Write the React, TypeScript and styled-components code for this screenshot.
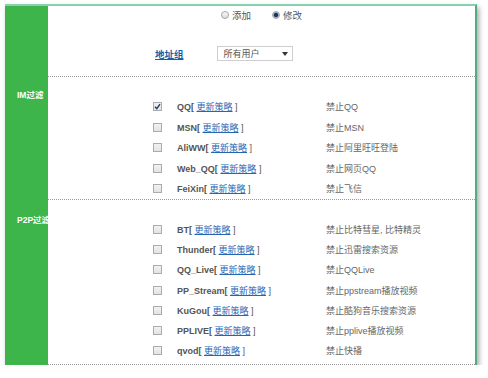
import React from 'react';
import styled, { createGlobalStyle } from 'styled-components';

interface Rule {
  name: string;
  desc: string;
  checked?: boolean;
}

const imRules: Rule[] = [
  { name: 'QQ', desc: '禁止QQ', checked: true },
  { name: 'MSN', desc: '禁止MSN' },
  { name: 'AliWW', desc: '禁止阿里旺旺登陆' },
  { name: 'Web_QQ', desc: '禁止网页QQ' },
  { name: 'FeiXin', desc: '禁止飞信' },
];

const p2pRules: Rule[] = [
  { name: 'BT', desc: '禁止比特彗星, 比特精灵' },
  { name: 'Thunder', desc: '禁止迅雷搜索资源' },
  { name: 'QQ_Live', desc: '禁止QQLive' },
  { name: 'PP_Stream', desc: '禁止ppstream播放视频' },
  { name: 'KuGou', desc: '禁止酷狗音乐搜索资源' },
  { name: 'PPLIVE', desc: '禁止pplive播放视频' },
  { name: 'qvod', desc: '禁止快播' },
];

export default function App() {
  return (
    <>
      <GlobalStyle />
      <Frame>
        <Section>
          <Side />
          <Main $pad="2px 0 15px">
            <RadioRow>
              <RadioLabel>
                <Radio selected={false} />
                添加
              </RadioLabel>
              <RadioLabel>
                <Radio selected />
                修改
              </RadioLabel>
            </RadioRow>
            <AddrRow>
              <GroupLink>地址组</GroupLink>
              <SelectBox>
                <span>所有用户</span>
                <Arrow />
              </SelectBox>
            </AddrRow>
          </Main>
        </Section>

        <Section>
          <Side>
            <SideLabel $top={13}>IM过滤</SideLabel>
          </Side>
          <Main $pad="19.5px 0 0">
            {imRules.map((r) => (
              <RuleRow key={r.name} $h={20.5} rule={r} />
            ))}
          </Main>
        </Section>

        <Section>
          <Side>
            <SideLabel $top={15}>P2P过滤</SideLabel>
          </Side>
          <Main $pad="19px 0 3px">
            {p2pRules.map((r) => (
              <RuleRow key={r.name} $h={20.3} rule={r} />
            ))}
          </Main>
        </Section>
      </Frame>
    </>
  );
}

function Radio({ selected }: { selected: boolean }) {
  return <RadioDot selected={selected} />;
}

function RuleRow({ rule, $h }: { rule: Rule; $h: number }) {
  return (
    <Row $h={$h}>
      <Check>
        {rule.checked && (
          <svg width="7" height="7" viewBox="0 0 7 7">
            <path d="M1 3.8 L2.8 5.6 L6 1.2" fill="none" stroke="#1c3f7a" strokeWidth="1.4" />
          </svg>
        )}
      </Check>
      <Name>
        <b>{rule.name}[</b> <Update>更新策略</Update> ]
      </Name>
      <Desc>{rule.desc}</Desc>
    </Row>
  );
}

const GlobalStyle = createGlobalStyle`
  * { box-sizing: border-box; }
  body {
    margin: 0;
    background: #fff;
    font-family: "Liberation Sans", "Noto Sans CJK SC", sans-serif;
  }
`;

const Frame = styled.div`
  margin: 4px 0 0 5px;
  width: 472px;
  border-top: 2px solid #88d1ae;
  border-right: 2px solid #55aa80;
  background: #fff;
  box-shadow: 2px 3px 5px rgba(0, 0, 0, 0.35);
`;

const Section = styled.div`
  display: grid;
  grid-template-columns: 43px 1fr;
`;

const Side = styled.div`
  background: #3db54b;
`;

const SideLabel = styled.div<{ $top: number }>`
  padding: ${(p) => p.$top}px 0 0 12px;
  color: #fff;
  font-size: 8.5px;
  font-weight: bold;
  line-height: 10px;
  white-space: nowrap;
`;

const Main = styled.div<{ $pad: string }>`
  display: flex;
  flex-direction: column;
  padding: ${(p) => p.$pad};
  border-bottom: 1px dotted #9a9a9a;
`;

const RadioRow = styled.div`
  display: flex;
  justify-content: center;
  align-items: center;
  gap: 21px;
  height: 14px;
`;

const RadioLabel = styled.label`
  display: flex;
  align-items: center;
  gap: 3px;
  font-size: 9.5px;
  color: #555;
`;

const RadioDot = styled.span<{ selected: boolean }>`
  display: inline-block;
  width: 8px;
  height: 8px;
  border-radius: 50%;
  border: 1px solid #a5a5a5;
  background: ${(p) =>
    p.selected
      ? 'radial-gradient(circle, #1d3658 0 1.8px, #7fa7c8 2.4px, #dfe8f0 3.4px)'
      : 'linear-gradient(#fafafa, #dcdcdc)'};
`;

const AddrRow = styled.div`
  display: flex;
  align-items: center;
  gap: 33px;
  height: 15px;
  margin-top: 24px;
  padding-left: 107px;
`;

const GroupLink = styled.a`
  color: #1b5ea8;
  font-size: 9.5px;
  font-weight: bold;
  text-decoration: underline;
`;

const SelectBox = styled.div`
  display: flex;
  align-items: center;
  justify-content: space-between;
  width: 76px;
  height: 15px;
  padding: 0 4px 0 6px;
  border: 1px solid #cfcfcf;
  font-size: 9px;
  color: #555;
`;

const Arrow = styled.span`
  width: 0;
  height: 0;
  border-left: 3px solid transparent;
  border-right: 3px solid transparent;
  border-top: 4px solid #333;
`;

const Row = styled.div<{ $h: number }>`
  display: grid;
  grid-template-columns: 9px 134px 1fr;
  column-gap: 15px;
  align-items: center;
  height: ${(p) => p.$h}px;
  padding-left: 105px;
  font-size: 9px;
  white-space: nowrap;
`;

const Check = styled.span`
  display: flex;
  align-items: center;
  justify-content: center;
  width: 9px;
  height: 9px;
  border: 1px solid #ababab;
  background: linear-gradient(#f2f2f2, #e3e3e3);
`;

const Name = styled.span`
  color: #555;

  b {
    font-weight: bold;
  }
`;

const Update = styled.a`
  color: #2566b3;
  text-decoration: underline;
`;

const Desc = styled.span`
  color: #666;
`;
